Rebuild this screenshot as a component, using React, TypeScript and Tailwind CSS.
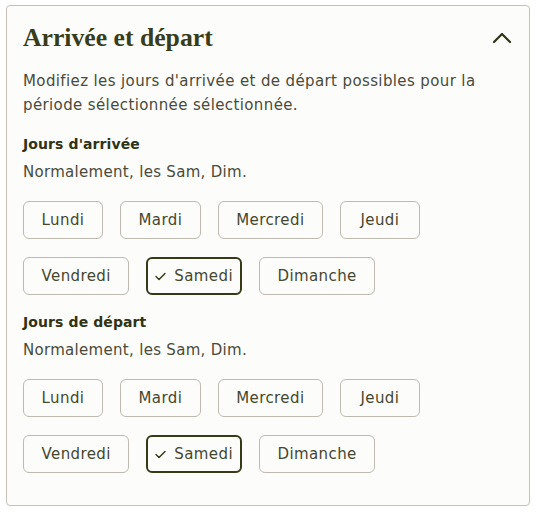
import React from "react";

const days = ["Lundi", "Mardi", "Mercredi", "Jeudi", "Vendredi", "Samedi", "Dimanche"];

function DayButton({ label, selected }: { label: string; selected: boolean }) {
  return (
    <button
      type="button"
      className={
        selected
          ? "h-[38px] px-[7px] rounded-[6px] border-2 border-[#373a16] flex items-center justify-center gap-[8px] text-[15px] tracking-[0.4px] text-[#45472f]"
          : "h-[38px] min-w-[80px] px-[17.5px] rounded-[6px] border border-[#bdbab0] flex items-center justify-center text-[15px] tracking-[0.4px] text-[#45472f]"
      }
    >
      {selected && (
        <svg width="11" height="9" viewBox="0 0 11 9" fill="none">
          <path d="M1 4.6 L4 7.6 L10 1.4" stroke="#373a16" strokeWidth="1.4" strokeLinecap="round" strokeLinejoin="round" />
        </svg>
      )}
      <span>{label}</span>
    </button>
  );
}

function Section({ title }: { title: string }) {
  return (
    <div className="flex flex-col">
      <div className="text-[14px] leading-[24px] font-bold tracking-[0.1px] text-[#2f3316]">{title}</div>
      <div className="mt-[4px] text-[15px] leading-[24px] tracking-[0.3px] text-[#4a4b3a]">Normalement, les Sam, Dim.</div>
      <div className="mt-[17px] flex flex-col gap-[18px]">
        <div className="flex gap-[17px]">
          {days.slice(0, 4).map((d) => (
            <DayButton key={d} label={d} selected={false} />
          ))}
        </div>
        <div className="flex gap-[17px]">
          {days.slice(4).map((d) => (
            <DayButton key={d} label={d} selected={d === "Samedi"} />
          ))}
        </div>
      </div>
    </div>
  );
}

export default function App() {
  return (
    <div className="w-[537px] h-[512px] bg-white pt-[5px] pl-[6px]" style={{ fontFamily: '"DejaVu Sans", sans-serif' }}>
      <div className="w-[524px] h-[501px] rounded-[4px] border border-[#c4c1b6] bg-[#fcfcfa] px-[16px] pt-[17px] pb-[32px]">
        <div className="flex items-center justify-between h-[30px]">
          <h2
            className="text-[25.7px] leading-[30px] font-bold text-[#383c18]"
            style={{ fontFamily: '"Liberation Serif", serif' }}
          >
            Arrivée et départ
          </h2>
          <svg width="20" height="12" viewBox="0 0 20 12" fill="none" className="mr-[1px]">
            <path d="M2 10 L10 2 L18 10" stroke="#2f3316" strokeWidth="2.2" strokeLinecap="round" strokeLinejoin="round" />
          </svg>
        </div>
        <p className="mt-[16px] text-[15px] leading-[24px] tracking-[0.38px] text-[#4a4b3a]">
          Modifiez les jours d'arrivée et de départ possibles pour la
          <br />
          période sélectionnée sélectionnée.
        </p>
        <div className="mt-[15px] flex flex-col gap-[15px]">
          <Section title="Jours d'arrivée" />
          <Section title="Jours de départ" />
        </div>
      </div>
    </div>
  );
}
